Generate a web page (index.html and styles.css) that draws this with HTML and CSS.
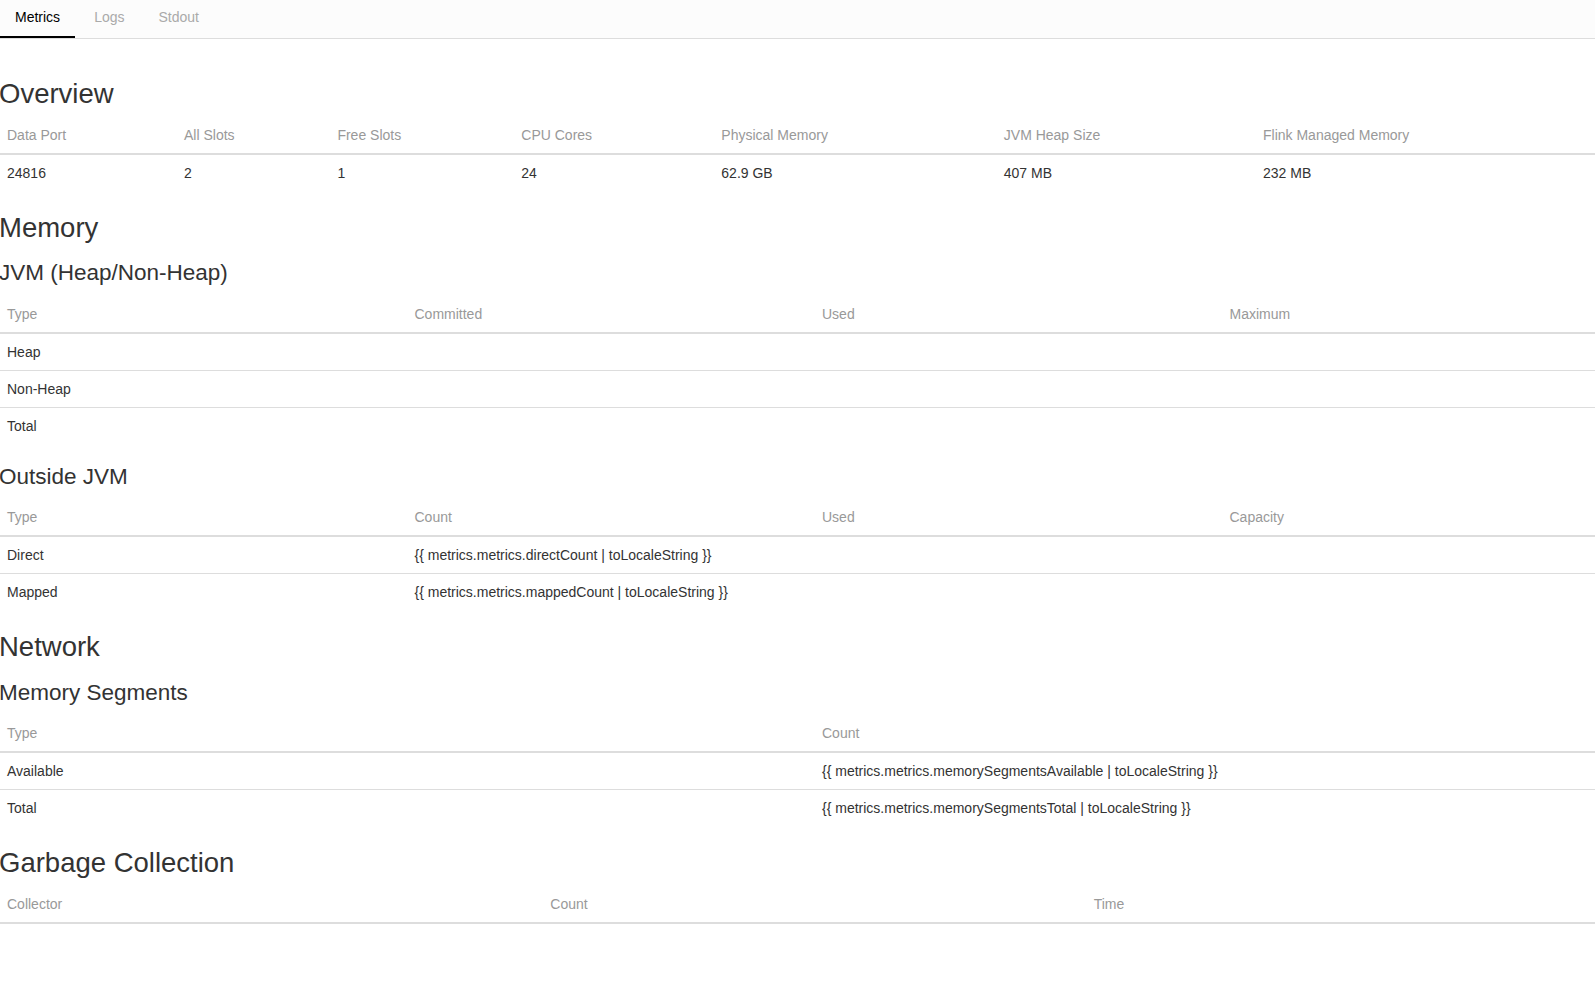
FILE: index.html
```html
<!doctype html>
<html lang="en">

<head>
    <meta charset="UTF-8" />
    <meta name="viewport" content="width=device-width, initial-scale=1.0" />
    <title>Task Manager - Metrics</title>
    <link rel="stylesheet" href="styles.css">
</head>

<body>
    <nav class="tabs">
        <a class="tab active">Metrics</a>
        <a class="tab">Logs</a>
        <a class="tab">Stdout</a>
    </nav>

    <div class="content">
        <h1>Overview</h1>
        <table class="table">
            <thead>
                <tr>
                    <th class="col-port">Data Port</th>
                    <th>All Slots</th>
                    <th>Free Slots</th>
                    <th>CPU Cores</th>
                    <th>Physical Memory</th>
                    <th>JVM Heap Size</th>
                    <th>Flink Managed Memory</th>
                </tr>
            </thead>
            <tbody>
                <tr>
                    <td>24816</td>
                    <td>2</td>
                    <td>1</td>
                    <td>24</td>
                    <td>62.9 GB</td>
                    <td>407 MB</td>
                    <td>232 MB</td>
                </tr>
            </tbody>
        </table>

        <h1>Memory</h1>
        <h2>JVM (Heap/Non-Heap)</h2>
        <table class="table fixed">
            <thead>
                <tr>
                    <th>Type</th>
                    <th>Committed</th>
                    <th>Used</th>
                    <th>Maximum</th>
                </tr>
            </thead>
            <tbody>
                <tr><td>Heap</td><td></td><td></td><td></td></tr>
                <tr><td>Non-Heap</td><td></td><td></td><td></td></tr>
                <tr><td>Total</td><td></td><td></td><td></td></tr>
            </tbody>
        </table>

        <h2>Outside JVM</h2>
        <table class="table fixed">
            <thead>
                <tr>
                    <th>Type</th>
                    <th>Count</th>
                    <th>Used</th>
                    <th>Capacity</th>
                </tr>
            </thead>
            <tbody>
                <tr><td>Direct</td><td>{{ metrics.metrics.directCount | toLocaleString }}</td><td></td><td></td></tr>
                <tr><td>Mapped</td><td>{{ metrics.metrics.mappedCount | toLocaleString }}</td><td></td><td></td></tr>
            </tbody>
        </table>

        <h1>Network</h1>
        <h2>Memory Segments</h2>
        <table class="table fixed">
            <thead>
                <tr>
                    <th>Type</th>
                    <th>Count</th>
                </tr>
            </thead>
            <tbody>
                <tr><td>Available</td><td>{{ metrics.metrics.memorySegmentsAvailable | toLocaleString }}</td></tr>
                <tr><td>Total</td><td>{{ metrics.metrics.memorySegmentsTotal | toLocaleString }}</td></tr>
            </tbody>
        </table>

        <h1>Garbage Collection</h1>
        <table class="table fixed">
            <thead>
                <tr>
                    <th>Collector</th>
                    <th>Count</th>
                    <th>Time</th>
                </tr>
            </thead>
            <tbody></tbody>
        </table>
    </div>
</body>

</html>
```

FILE: styles.css
```css
html,
body {
    overflow: hidden;
}

body {
    margin: 0;
    font-family: "Liberation Sans", Arial, sans-serif;
    font-size: 14px;
    line-height: 20px;
    color: #333;
    background: white;
}

.tabs {
    display: flex;
    gap: 4px;
    height: 38px;
    background: #fcfcfc;
    border-bottom: 1px solid #ddd;
}

.tab {
    padding: 7px 15px 10px;
    border-bottom: 2px solid transparent;
    color: #aaa;
    cursor: pointer;
}

.tab.active {
    color: #000;
    border-bottom-color: #000;
}

.content {
    width: 1630px;
    margin-left: -1px;
    padding-top: 18px;
}

h1,
h2 {
    font-weight: normal;
    color: #333;
    margin: 20px 0 10px;
}

h1 {
    font-size: 27.5px;
    line-height: 25.7px;
    margin-top: 24px;
}

h2 {
    font-size: 22.5px;
    line-height: 25.3px;
}

.table {
    width: 100%;
    border-collapse: collapse;
    margin-bottom: 20px;
}

.table.fixed {
    table-layout: fixed;
}

.table th {
    text-align: left;
    font-weight: normal;
    color: #999;
    padding: 8px;
    border-bottom: 2px solid #ddd;
    vertical-align: bottom;
}

.table th.col-port {
    width: 161px;
}

.table td {
    padding: 8px;
    border-top: 1px solid #ddd;
    height: 20px;
}
```
